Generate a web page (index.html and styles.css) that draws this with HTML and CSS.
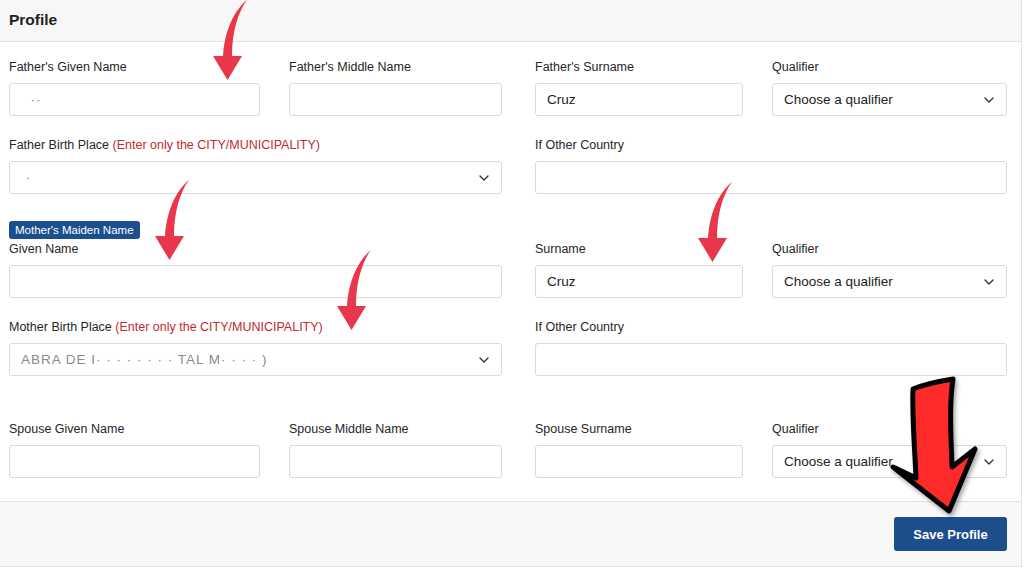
FILE: index.html
```html
<!DOCTYPE html>
<html lang="en">
<head>
    <meta charset="UTF-8">
    <meta name="viewport" content="width=device-width, initial-scale=1.0">
    <title>Profile</title>
    <link rel="stylesheet" href="styles.css">
</head>
<body>

    <div class="page">
        <div class="card">
            <div class="card-header">Profile</div>

            <form class="card-body" id="profileForm">
                <!-- Father -->
                <div class="row">
                    <div class="half half-left">
                        <div class="field">
                            <label for="fatherGiven">Father's Given Name</label>
                            <input type="text" id="fatherGiven" class="blurred" value="  ··">
                        </div>
                        <div class="field">
                            <label for="fatherMiddle">Father's Middle Name</label>
                            <input type="text" id="fatherMiddle">
                        </div>
                    </div>
                    <div class="half half-right">
                        <div class="field">
                            <label for="fatherSurname">Father's Surname</label>
                            <input type="text" id="fatherSurname" value="Cruz">
                        </div>
                        <div class="field">
                            <label for="fatherQualifier">Qualifier</label>
                            <div class="select">
                                <select id="fatherQualifier">
                                    <option>Choose a qualifier</option>
                                    <option>Jr.</option>
                                    <option>Sr.</option>
                                    <option>III</option>
                                </select>
                                <svg class="chevron" viewBox="0 0 10 6"><path d="M1 1l4 4 4-4"/></svg>
                            </div>
                        </div>
                    </div>
                </div>

                <div class="row">
                    <div class="field">
                        <label for="fatherBirthPlace">Father Birth Place <span class="hint">(Enter only the CITY/MUNICIPALITY)</span></label>
                        <div class="select">
                            <select id="fatherBirthPlace" class="blurred">
                                <option>&nbsp;·</option>
                            </select>
                            <svg class="chevron" viewBox="0 0 10 6"><path d="M1 1l4 4 4-4"/></svg>
                        </div>
                    </div>
                    <div class="field">
                        <label for="fatherCountry">If Other Country</label>
                        <input type="text" id="fatherCountry">
                    </div>
                </div>

                <!-- Mother -->
                <span class="badge">Mother's Maiden Name</span>
                <div class="row">
                    <div class="field">
                        <label for="motherGiven">Given Name</label>
                        <input type="text" id="motherGiven">
                    </div>
                    <div class="half half-right">
                        <div class="field">
                            <label for="motherSurname">Surname</label>
                            <input type="text" id="motherSurname" value="Cruz">
                        </div>
                        <div class="field">
                            <label for="motherQualifier">Qualifier</label>
                            <div class="select">
                                <select id="motherQualifier">
                                    <option>Choose a qualifier</option>
                                    <option>Jr.</option>
                                    <option>Sr.</option>
                                </select>
                                <svg class="chevron" viewBox="0 0 10 6"><path d="M1 1l4 4 4-4"/></svg>
                            </div>
                        </div>
                    </div>
                </div>

                <div class="row">
                    <div class="field">
                        <label for="motherBirthPlace">Mother Birth Place <span class="hint">(Enter only the CITY/MUNICIPALITY)</span></label>
                        <div class="select">
                            <select id="motherBirthPlace" class="blurred">
                                <option>ABRA DE I· · · ·   · · · · TAL M· · · ·  )</option>
                            </select>
                            <svg class="chevron" viewBox="0 0 10 6"><path d="M1 1l4 4 4-4"/></svg>
                        </div>
                    </div>
                    <div class="field">
                        <label for="motherCountry">If Other Country</label>
                        <input type="text" id="motherCountry">
                    </div>
                </div>

                <!-- Spouse -->
                <div class="row row-spouse">
                    <div class="half half-left">
                        <div class="field">
                            <label for="spouseGiven">Spouse Given Name</label>
                            <input type="text" id="spouseGiven">
                        </div>
                        <div class="field">
                            <label for="spouseMiddle">Spouse Middle Name</label>
                            <input type="text" id="spouseMiddle">
                        </div>
                    </div>
                    <div class="half half-right">
                        <div class="field">
                            <label for="spouseSurname">Spouse Surname</label>
                            <input type="text" id="spouseSurname">
                        </div>
                        <div class="field">
                            <label for="spouseQualifier">Qualifier</label>
                            <div class="select">
                                <select id="spouseQualifier">
                                    <option>Choose a qualifier</option>
                                    <option>Jr.</option>
                                    <option>Sr.</option>
                                </select>
                                <svg class="chevron" viewBox="0 0 10 6"><path d="M1 1l4 4 4-4"/></svg>
                            </div>
                        </div>
                    </div>
                </div>
            </form>

            <div class="card-footer">
                <button type="button" class="btn-save">Save Profile</button>
            </div>
        </div>

        <!-- pointer arrows -->
        <svg class="arrow arrow-1" viewBox="0 0 36 80"><path d="M34 0C24 8 12 26 10 56H0l14.5 24L29 56h-10C19 32 25 12 34 0z"/></svg>
        <svg class="arrow arrow-2" viewBox="0 0 36 80"><path d="M34 0C24 8 12 26 10 56H0l14.5 24L29 56h-10C19 32 25 12 34 0z"/></svg>
        <svg class="arrow arrow-3" viewBox="0 0 36 80"><path d="M34 0C24 8 12 26 10 56H0l14.5 24L29 56h-10C19 32 25 12 34 0z"/></svg>
        <svg class="arrow arrow-4" viewBox="0 0 36 80"><path d="M34 0C24 8 12 26 10 56H0l14.5 24L29 56h-10C19 32 25 12 34 0z"/></svg>
        <svg class="arrow-big" viewBox="0 0 100 150"><path d="M28 14C42 8 56 6 68 4C64 30 66 60 67 92L90 74L64 136L8 92L31 103C30 75 27 45 28 14Z"/></svg>
    </div>

</body>
</html>
```

FILE: styles.css
```css
body {
    font-family: "Liberation Sans", Arial, sans-serif;
    margin: 0;
    padding: 0;
    background-color: #fff;
    color: #262626;
}
.page {
    position: relative;
    width: 1024px;
    height: 576px;
    overflow: hidden;
}
.card {
    width: 1021px;
    border-right: 1px solid #e3e3e3;
    border-bottom: 1px solid #e3e3e3;
}
.card-header {
    height: 41px;
    line-height: 40px;
    padding-left: 9px;
    background: #f7f7f7;
    border-bottom: 1px solid #e2e2e2;
    font-size: 15.5px;
    font-weight: bold;
    color: #222;
}
.card-body {
    margin: 0;
    padding: 17px 14px 23px 9px;
}
.row {
    display: grid;
    grid-template-columns: 493px 472px;
    column-gap: 33px;
    margin-bottom: 21px;
}
.row:last-child {
    margin-bottom: 0;
}
.row-spouse {
    margin-top: 45px;
}
.half {
    display: grid;
    column-gap: 29px;
}
.half-left {
    grid-template-columns: 251px 213px;
}
.half-right {
    grid-template-columns: 208px 235px;
}
.field label {
    display: block;
    font-size: 12.5px;
    line-height: 16px;
    margin-bottom: 8px;
    color: #262626;
    white-space: nowrap;
}
.hint {
    color: #bf2a30;
}
.field input,
.field select {
    display: block;
    width: 100%;
    height: 33px;
    box-sizing: border-box;
    padding: 0 11px;
    border: 1px solid #dadada;
    border-radius: 3px;
    background: #fff;
    font-family: inherit;
    font-size: 13.5px;
    color: #222;
    outline: none;
}
.field select {
    appearance: none;
    -webkit-appearance: none;
    padding-right: 30px;
}
.blurred {
    color: #8a8a8a !important;
    letter-spacing: 1px;
}
.select {
    position: relative;
}
.chevron {
    position: absolute;
    right: 13px;
    top: 14px;
    width: 10px;
    height: 6px;
    fill: none;
    stroke: #333;
    stroke-width: 1.4;
    stroke-linecap: round;
    stroke-linejoin: round;
    pointer-events: none;
}
.badge {
    display: inline-block;
    margin-top: 6px;
    margin-bottom: 2px;
    height: 18px;
    line-height: 18px;
    padding: 0 6px;
    background: #1b4f8e;
    color: #fff;
    font-size: 11.5px;
    border-radius: 3px;
    vertical-align: top;
}
.card-footer {
    display: flex;
    justify-content: flex-end;
    padding: 15px 14px 15px 9px;
    background: #f8f8f8;
    border-top: 1px solid #e2e2e2;
}
.btn-save {
    width: 113px;
    height: 34px;
    background-color: #1c4e8c;
    color: #fff;
    border: none;
    border-radius: 3px;
    font-family: inherit;
    font-size: 13px;
    font-weight: bold;
    cursor: pointer;
}
.btn-save:hover {
    background-color: #163f73;
}

/* red pointer arrows laid over the form */
.arrow {
    position: absolute;
    width: 36px;
    height: 80px;
    fill: #e8374a;
}
.arrow-1 { left: 213px; top: 0; }
.arrow-2 { left: 155px; top: 180px; }
.arrow-3 { left: 337px; top: 250px; }
.arrow-4 { left: 698px; top: 182px; }
.arrow-big {
    position: absolute;
    left: 885px;
    top: 375px;
    width: 100px;
    height: 150px;
    fill: #ff2b2b;
    stroke: #000;
    stroke-width: 5;
    stroke-linejoin: round;
    overflow: visible;
    filter: drop-shadow(2px 3px 2px rgba(0, 0, 0, 0.35));
}
```
